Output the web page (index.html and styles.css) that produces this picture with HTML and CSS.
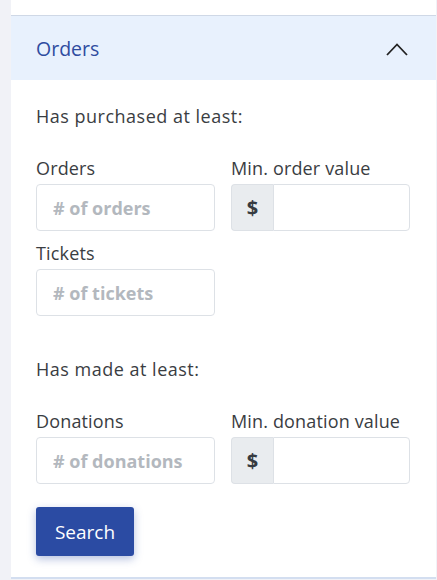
FILE: index.html
```html
<!DOCTYPE html>
<html>
<head>
<meta charset="utf-8">
<link rel="stylesheet" href="styles.css">
</head>
<body>
<div class="page">
  <div class="card">
    <div class="card-top"></div>
    <div class="panel-head">
      <span class="panel-title">Orders</span>
      <svg class="chev" width="22" height="13" viewBox="0 0 22 13"><polyline points="1,12 11,1.5 21,12" fill="none" stroke="#222" stroke-width="1.8"/></svg>
    </div>
    <div class="panel-body">
      <p class="section">Has purchased at least:</p>
      <div class="grid first">
        <div class="field">
          <label>Orders</label>
          <input class="inp" type="text" placeholder="# of orders">
        </div>
        <div class="field">
          <label>Min. order value</label>
          <div class="group"><span class="addon">$</span><input class="inp grp" type="text"></div>
        </div>
        <div class="field">
          <label>Tickets</label>
          <input class="inp" type="text" placeholder="# of tickets">
        </div>
      </div>
      <p class="section made">Has made at least:</p>
      <div class="grid first">
        <div class="field">
          <label>Donations</label>
          <input class="inp" type="text" placeholder="# of donations">
        </div>
        <div class="field">
          <label>Min. donation value</label>
          <div class="group"><span class="addon">$</span><input class="inp grp" type="text"></div>
        </div>
      </div>
      <button class="btn">Search</button>
    </div>
  </div>
</div>
</body>
</html>
```
FILE: styles.css
```css
html, body {
  margin: 0;
  padding: 0;
  background: #f1f2f7;
  font-family: "Open Sans", "Noto Sans", sans-serif;
  color: #3a3d42;
}
.page {
  padding-left: 11px;
  padding-right: 1px;
}
.card {
  background: #fff;
  border-bottom: 2px solid #d3def0;
}
.card-top {
  height: 15px;
  border-bottom: 1px solid #cfd8e6;
}
.panel-head {
  height: 64px;
  background: #e8f1fd;
  display: flex;
  align-items: center;
  justify-content: space-between;
  padding: 0 28px 0 25px;
}
.panel-title {
  font-size: 19.5px;
  color: #2f4ca0;
}
.chev {
  display: block;
  margin-top: 2px;
}
.panel-body {
  padding: 24px 26px 21px 25px;
}
.section {
  margin: 0;
  font-size: 18px;
  letter-spacing: 0.5px;
  line-height: 24px;
}
.made {
  margin-top: 41px;
}
.grid {
  display: grid;
  grid-template-columns: 179px 179px;
  column-gap: 16px;
  row-gap: 10px;
  margin-top: 28px;
}
.field label {
  display: block;
  font-size: 18px;
  letter-spacing: 0.15px;
  line-height: 24px;
  margin-bottom: 4px;
}
.inp {
  box-sizing: border-box;
  width: 100%;
  height: 47px;
  border: 1px solid #dde1e6;
  border-radius: 4px;
  padding: 0 16px;
  font-family: "Open Sans", "Noto Sans", sans-serif;
  font-size: 18px;
  font-weight: 700;
  color: #333;
  background: #fff;
  outline: none;
  display: block;
}
.inp::placeholder {
  color: #b3b8be;
}
.group {
  display: flex;
  height: 47px;
}
.addon {
  box-sizing: border-box;
  width: 42px;
  flex: none;
  background: #e9ecef;
  border: 1px solid #dde1e6;
  border-right: none;
  border-radius: 4px 0 0 4px;
  display: flex;
  align-items: center;
  justify-content: center;
  font-size: 20px;
  font-weight: 700;
  color: #363a40;
}
.inp.grp {
  flex: 1;
  width: auto;
  min-width: 0;
  border-radius: 0 4px 4px 0;
}
.btn {
  margin-top: 23px;
  width: 98px;
  height: 49px;
  background: #2b4ba3;
  color: #fff;
  border: none;
  border-radius: 3px;
  font-family: "Open Sans", "Noto Sans", sans-serif;
  font-size: 19px;
  box-shadow: 0 3px 8px rgba(43, 75, 163, 0.35);
  display: block;
  padding: 0;
}
```
